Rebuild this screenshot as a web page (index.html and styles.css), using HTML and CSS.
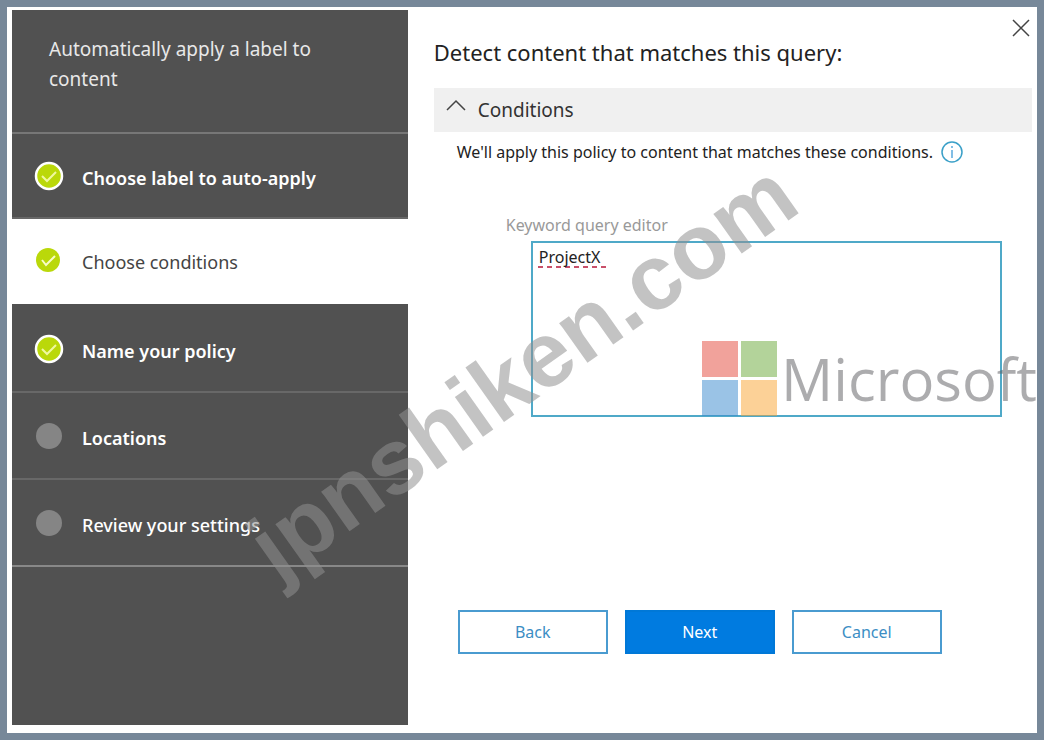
FILE: index.html
```
<!DOCTYPE html>
<html lang="en">
  <head>
    <meta charset="UTF-8" />
    <meta name="viewport" content="width=device-width, initial-scale=1.0" />
    <title>Automatically apply a label to content</title>
    <link rel="stylesheet" href="styles.css">
  </head>

  <body>
    <div class="wizard">
      <nav class="sidebar">
        <p class="sidebar-title">Automatically apply a label to content</p>
        <ol class="steps">
          <li class="step">
            <svg class="dot" viewBox="0 0 30 30">
              <circle cx="15" cy="15" r="13" fill="#bad80a" stroke="#fff" stroke-width="2.5" />
              <path d="M8 15l5 5 9-9" fill="none" stroke="#f0f8a0" stroke-width="2" />
            </svg>
            <a href="#label">Choose label to auto-apply</a>
          </li>
          <li class="step active">
            <svg class="dot" viewBox="0 0 30 30">
              <circle cx="14" cy="15" r="12" fill="#bad80a" />
              <path d="M8 15l4 5 9-9" fill="none" stroke="#f8fcc8" stroke-width="2" />
            </svg>
            <a href="#conditions" aria-current="step">Choose conditions</a>
          </li>
          <li class="step">
            <svg class="dot" viewBox="0 0 30 30">
              <circle cx="15" cy="15" r="13" fill="#bad80a" stroke="#fff" stroke-width="2.5" />
              <path d="M8 15l5 5 9-9" fill="none" stroke="#f0f8a0" stroke-width="2" />
            </svg>
            <a href="#name">Name your policy</a>
          </li>
          <li class="step">
            <svg class="dot" viewBox="0 0 30 30">
              <circle cx="15" cy="15" r="13" fill="#858585" />
            </svg>
            <a href="#locations">Locations</a>
          </li>
          <li class="step last">
            <svg class="dot" viewBox="0 0 30 30">
              <circle cx="15" cy="15" r="13" fill="#858585" />
            </svg>
            <a href="#review">Review your settings</a>
          </li>
        </ol>
      </nav>

      <main class="content">
        <button class="close" type="button" aria-label="Close">
          <svg viewBox="0 0 18 18">
            <path d="M1 1l16 16M17 1L1 17" fill="none" stroke="#444" stroke-width="1.5" />
          </svg>
        </button>
        <h1>Detect content that matches this query:</h1>
        <button class="section" type="button" aria-expanded="true">
          <svg viewBox="0 0 20 12">
            <path d="M1 11l9-9 9 9" fill="none" stroke="#444" stroke-width="1.5" />
          </svg>
          Conditions
        </button>
        <p class="hint">
          We'll apply this policy to content that matches these conditions.
          <svg viewBox="0 0 22 22">
            <circle cx="11" cy="11" r="10" fill="none" stroke="#3ba0c8" stroke-width="1.5" />
            <path d="M11 9v8M11 5v2" stroke="#5aa9dd" stroke-width="1.5" />
          </svg>
        </p>
        <form class="editor">
          <label for="query">Keyword query editor</label>
          <textarea id="query" spellcheck="false">ProjectX</textarea>
        </form>
        <div class="actions">
          <button type="button">Back</button>
          <button class="primary" type="button">Next</button>
          <button type="button">Cancel</button>
        </div>
      </main>

      <div class="brand">
        <svg viewBox="0 0 75 75">
          <rect width="36" height="36" fill="#e4483a" />
          <rect x="39" width="36" height="36" fill="#6aa838" />
          <rect y="39" width="36" height="36" fill="#3888cf" />
          <rect x="39" y="39" width="36" height="36" fill="#fba432" />
        </svg>
        <span>Microsoft</span>
      </div>
      <div class="watermark">jpnshiken.com</div>
    </div>
  </body>
</html>
```
FILE: styles.css
```
* {
  box-sizing: border-box;
}

body {
  margin: 0;
  font-family: "Noto Sans", "Open Sans", sans-serif;
  color: #222;
}

.wizard {
  position: relative;
  display: flex;
  min-height: 100vh;
  padding: 3px 5px 8px;
  border: 7px solid #778899;
  background: #fff;
  overflow: hidden;
}

.sidebar {
  width: 38.8%;
  background: #515151;
  color: #e8e8e8;
}

.sidebar-title {
  height: 124px;
  margin: 0;
  padding: 24px 72px 0 37px;
  border-bottom: 2px solid #777;
  font-size: 19px;
  line-height: 30px;
}

.steps {
  margin: 0;
  padding: 0;
  list-style: none;
}

.step {
  display: flex;
  align-items: center;
  gap: 18px;
  height: 87px;
  padding-left: 22px;
  border-bottom: 2px solid #686868;
}

.step:first-child {
  height: 85px;
}

.step a {
  padding-top: 4px;
  color: #fff;
  font-size: 18px;
  font-weight: 600;
  text-decoration: none;
}

.step.active {
  padding-bottom: 4px;
  background: #fff;
  border-color: #515151;
}

.step.active a {
  color: #444;
  font-weight: 400;
}

.step.last {
  border-color: #888;
}

.step.last a {
  font-weight: 500;
}

.dot {
  width: 30px;
  height: 30px;
}

.content {
  flex: 1;
  padding: 25px 0 0 26px;
}

button {
  font-family: inherit;
  cursor: pointer;
}

.close {
  position: absolute;
  top: 12px;
  right: 7px;
  padding: 0;
  border: none;
  background: none;
}

.close svg {
  display: block;
  width: 18px;
  height: 18px;
}

h1 {
  margin: 0 0 19px;
  font-size: 22px;
  font-weight: 400;
  line-height: 34px;
}

.section {
  display: flex;
  align-items: center;
  gap: 12px;
  width: 100%;
  height: 44px;
  padding: 0 12px;
  border: none;
  background: #f0f0f0;
  color: #333;
  font-size: 19px;
}

.section svg {
  width: 20px;
  height: 12px;
  margin-bottom: 10px;
}

.hint {
  display: flex;
  align-items: center;
  gap: 8px;
  margin: 8px 0 0 23px;
  font-size: 16px;
  line-height: 24px;
}

.hint svg {
  width: 22px;
  height: 22px;
}

.editor {
  display: flex;
  flex-direction: column;
  margin: 49px 30px 0 72px;
}

.editor label {
  color: #999;
  font-size: 16px;
  line-height: 24px;
}

.editor textarea {
  height: 176px;
  margin: 4px 0 0 25px;
  padding: 3px 6px;
  border: 2px solid #4fa9c8;
  /* spelling underline below the first line */
  background: repeating-linear-gradient(90deg, #c8506a 0 5px, transparent 5px 9px) 5px 23px / 68px 2px no-repeat;
  color: #222;
  font-family: inherit;
  font-size: 16px;
  line-height: 22px;
  outline: none;
  resize: none;
}

.actions {
  display: flex;
  gap: 17px;
  margin: 193px 0 0 24px;
}

.actions button {
  width: 150px;
  height: 44px;
  border: 2px solid #4a9bd0;
  background: #fff;
  color: #3c8ec4;
  font-size: 16px;
}

.actions .primary {
  border-color: #0078d7;
  background: #007be0;
  color: #fff;
}

.brand {
  position: absolute;
  top: 334px;
  right: 0;
  display: flex;
  align-items: center;
  gap: 4px;
  opacity: 0.5;
  pointer-events: none;
}

.brand svg {
  width: 75px;
  height: 75px;
}

.brand span {
  color: #5c5c60;
  font-family: "Open Sans", "Noto Sans", sans-serif;
  font-size: 58px;
  font-weight: 500;
  line-height: 72px;
}

.watermark {
  position: absolute;
  top: 50%;
  left: 50%;
  color: rgba(144, 144, 144, 0.54);
  font-family: "Liberation Sans", Arial, sans-serif;
  font-size: 92px;
  font-weight: 700;
  line-height: 1;
  transform: translate(-50%, -50%) rotate(-35.3deg);
  pointer-events: none;
}
```
